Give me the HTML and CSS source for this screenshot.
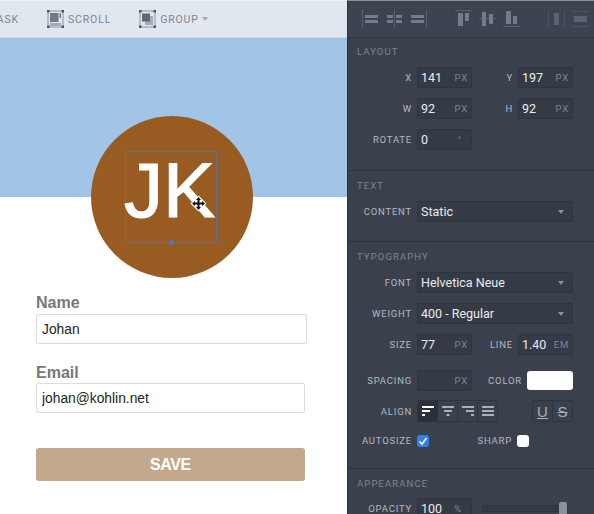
FILE: index.html
```html
<!DOCTYPE html>
<html lang="en">
<head>
  <meta charset="UTF-8" />
  <title>Profile editor</title>
  <link rel="stylesheet" href="styles.css">
</head>
<body>

<div class="app">
  <div class="canvas">
    <div class="toolbar">
      <div class="tool tool-clip"><span>MASK</span></div>
      <div class="tool tool-scroll">
        <svg width="17" height="18" viewBox="0 0 17 18">
          <rect x="1" y="1" width="15" height="16" fill="none" stroke="#8b94a0"/>
          <rect x="3" y="3" width="8.5" height="9" fill="#717a87"/>
          <rect x="3" y="13" width="11" height="3" fill="#a3abb6"/>
          <rect x="12.5" y="3" width="1.5" height="5" fill="#717a87"/>
          <rect x="0" y="0" width="2.5" height="2.5" fill="#4c5460"/><rect x="14.5" y="0" width="2.5" height="2.5" fill="#4c5460"/>
          <rect x="0" y="15.5" width="2.5" height="2.5" fill="#4c5460"/><rect x="14.5" y="15.5" width="2.5" height="2.5" fill="#4c5460"/>
        </svg>
        <span>SCROLL</span>
      </div>
      <div class="tool tool-group">
        <svg width="17" height="18" viewBox="0 0 17 18">
          <rect x="1" y="1" width="15" height="16" fill="none" stroke="#8b94a0"/>
          <rect x="6" y="6" width="8" height="9" fill="#a3abb6"/>
          <rect x="3" y="3.5" width="8" height="8" fill="#5f6874"/>
          <rect x="0" y="0" width="2.5" height="2.5" fill="#4c5460"/><rect x="14.5" y="0" width="2.5" height="2.5" fill="#4c5460"/>
          <rect x="0" y="15.5" width="2.5" height="2.5" fill="#4c5460"/><rect x="14.5" y="15.5" width="2.5" height="2.5" fill="#4c5460"/>
        </svg>
        <span>GROUP</span>
        <i class="caret caret-light"></i>
      </div>
    </div>

    <div class="hero"></div>

    <div class="avatar">
      <div class="selection">
        <span class="initials">JK</span>
        <i class="handle"></i>
      </div>
      <svg class="move-cursor" width="17" height="17" viewBox="0 0 17 17">
        <path d="M8.5 0.5 L16.5 8.5 L8.5 16.5 L0.5 8.5 Z" fill="#fff"/>
        <path d="M8.5 2 L11 5 H9.5 V7.5 H12 V6 L15 8.5 L12 11 V9.5 H9.5 V12 H11 L8.5 15 L6 12 H7.5 V9.5 H5 V11 L2 8.5 L5 6 V7.5 H7.5 V5 H6 Z" fill="#111"/>
      </svg>
    </div>

    <form class="profile-form">
      <label class="form-label" for="name">Name</label>
      <input class="form-input name-input" id="name" type="text" value="Johan" />
      <label class="form-label email-label" for="email">Email</label>
      <input class="form-input" id="email" type="text" value="johan@kohlin.net" />
      <button class="save-btn" type="button">SAVE</button>
    </form>
  </div>

  <div class="panel">
    <div class="align-bar">
      <svg width="17" height="18" viewBox="0 0 17 18"><rect x="0" y="0" width="1" height="18" fill="#5a626f"/><rect x="3" y="5" width="13" height="3" fill="#737c89"/><rect x="3" y="10" width="13" height="3" fill="#737c89"/></svg>
      <svg width="17" height="18" viewBox="0 0 17 18"><rect x="8" y="0" width="1" height="18" fill="#5a626f"/><rect x="1" y="5" width="6" height="3" fill="#737c89"/><rect x="10" y="5" width="6" height="3" fill="#737c89"/><rect x="1" y="10" width="6" height="3" fill="#737c89"/><rect x="10" y="10" width="6" height="3" fill="#737c89"/></svg>
      <svg width="17" height="18" viewBox="0 0 17 18"><rect x="16" y="0" width="1" height="18" fill="#5a626f"/><rect x="1" y="5" width="13" height="3" fill="#737c89"/><rect x="1" y="10" width="13" height="3" fill="#737c89"/></svg>
      <svg class="group-start" width="17" height="18" viewBox="0 0 17 18"><rect x="0" y="0" width="17" height="1" fill="#5a626f"/><rect x="3" y="3" width="5" height="13" fill="#737c89"/><rect x="10" y="3" width="4" height="8" fill="#737c89"/></svg>
      <svg width="17" height="18" viewBox="0 0 17 18"><rect x="0" y="8" width="17" height="1" fill="#5a626f"/><rect x="3" y="2" width="4" height="14" fill="#737c89"/><rect x="10" y="4" width="4" height="10" fill="#737c89"/></svg>
      <svg width="17" height="18" viewBox="0 0 17 18"><rect x="0" y="16" width="17" height="1" fill="#5a626f"/><rect x="3" y="1" width="5" height="13" fill="#737c89"/><rect x="10" y="6" width="4" height="8" fill="#737c89"/></svg>
      <svg class="group-start dim" width="17" height="18" viewBox="0 0 17 18"><rect x="0" y="0" width="1" height="18" fill="#5a626f"/><rect x="16" y="0" width="1" height="18" fill="#5a626f"/><rect x="6" y="3" width="5" height="12" fill="#737c89"/></svg>
      <svg class="dim" width="17" height="18" viewBox="0 0 17 18"><rect x="0" y="1" width="17" height="1" fill="#5a626f"/><rect x="0" y="16" width="17" height="1" fill="#5a626f"/><rect x="2" y="6" width="13" height="6" fill="#737c89"/></svg>
    </div>

    <section class="section section-layout">
      <h3>LAYOUT</h3>
      <div class="row">
        <label>X</label><div class="field"><span>141</span><em>PX</em></div>
        <label class="second">Y</label><div class="field"><span>197</span><em>PX</em></div>
      </div>
      <div class="row">
        <label>W</label><div class="field"><span>92</span><em>PX</em></div>
        <label class="second">H</label><div class="field"><span>92</span><em>PX</em></div>
      </div>
      <div class="row">
        <label>ROTATE</label><div class="field"><span>0</span><em class="deg">°</em></div>
      </div>
    </section>

    <section class="section section-text">
      <h3>TEXT</h3>
      <div class="row">
        <label>CONTENT</label><div class="field select"><span>Static</span><i class="caret"></i></div>
      </div>
    </section>

    <section class="section section-type">
      <h3>TYPOGRAPHY</h3>
      <div class="row">
        <label>FONT</label><div class="field select"><span>Helvetica Neue</span><i class="caret"></i></div>
      </div>
      <div class="row">
        <label>WEIGHT</label><div class="field select"><span>400 - Regular</span><i class="caret"></i></div>
      </div>
      <div class="row">
        <label>SIZE</label><div class="field"><span>77</span><em>PX</em></div>
        <label class="second">LINE</label><div class="field"><span>1.40</span><em>EM</em></div>
      </div>
      <div class="row row-spacing">
        <label>SPACING</label><div class="field"><span></span><em>PX</em></div>
        <label class="color-label">COLOR</label><div class="swatch"></div>
      </div>
      <div class="row row-align">
        <label>ALIGN</label>
        <div class="btn-group">
          <button class="active" type="button"><svg width="12" height="10" viewBox="0 0 12 10"><rect width="12" height="2"/><rect y="4" width="8" height="2"/><rect y="8" width="3" height="2"/></svg></button>
          <button type="button"><svg width="12" height="10" viewBox="0 0 12 10"><rect width="12" height="2"/><rect x="2" y="4" width="8" height="2"/><rect x="4.5" y="8" width="3" height="2"/></svg></button>
          <button type="button"><svg width="12" height="10" viewBox="0 0 12 10"><rect width="12" height="2"/><rect x="4" y="4" width="8" height="2"/><rect x="9" y="8" width="3" height="2"/></svg></button>
          <button type="button"><svg width="12" height="10" viewBox="0 0 12 10"><rect width="12" height="2"/><rect y="4" width="12" height="2"/><rect y="8" width="12" height="2"/></svg></button>
        </div>
        <div class="btn-group style-group">
          <button type="button"><u>U</u></button>
          <button type="button"><s>S</s></button>
        </div>
      </div>
      <div class="row row-check">
        <label>AUTOSIZE</label>
        <div class="check checked"><svg width="10" height="10" viewBox="0 0 10 10"><path d="M1.5 5.5 L4 8 L8.5 2" fill="none" stroke="#fff" stroke-width="1.6"/></svg></div>
        <label class="sharp-label">SHARP</label>
        <div class="check"></div>
      </div>
    </section>

    <section class="section section-appearance">
      <h3>APPEARANCE</h3>
      <div class="row">
        <label>OPACITY</label><div class="field"><span>100</span><em class="pct">%</em></div>
        <div class="slider"><i class="thumb"></i></div>
      </div>
    </section>
  </div>
</div>

</body>
</html>
```

FILE: styles.css
```css
* {
  box-sizing: border-box;
}
html, body {
  margin: 0;
  height: 100%;
  overflow: hidden;
}
.app {
  display: flex;
  width: 594px;
  height: 514px;
  font-family: "Liberation Sans", sans-serif;
}

/* left side */
.canvas {
  width: 347px;
  height: 514px;
  background: #fff;
  flex: none;
  overflow: hidden;
}
.toolbar {
  display: flex;
  align-items: center;
  height: 38px;
  background: #e1e7ef;
  border-top: 1px solid #f0f1f3;
  border-bottom: 1px solid #d3d9e1;
  font-family: Roboto, sans-serif;
  font-size: 10.5px;
  letter-spacing: 0.85px;
  color: #7c8592;
}
.tool {
  display: flex;
  align-items: center;
}
.tool-clip {
  width: 19px;
  justify-content: flex-end;
  overflow: hidden;
}
.tool-scroll {
  margin-left: 28px;
  gap: 4px;
}
.tool-group {
  margin-left: 28px;
  gap: 4px;
}
.tool-group .caret {
  margin-left: -1px;
}
.caret {
  display: block;
  width: 0;
  height: 0;
  border-left: 3px solid transparent;
  border-right: 3px solid transparent;
  border-top: 4px solid #8a93a0;
}
.caret-light {
  border-top-color: #a3abb6;
}
.hero {
  height: 159px;
  background: #a2c4e6;
}
.avatar {
  position: relative;
  display: flex;
  align-items: center;
  justify-content: center;
  width: 162px;
  height: 162px;
  margin: -81px 0 0 91px;
  border-radius: 50%;
  background: #985b22;
}
.selection {
  position: relative;
  width: 92px;
  height: 92px;
  margin-right: 2px;
  border: 1px solid #64708a;
}
.initials {
  display: block;
  margin: -1px 0 0 -2px;
  font-size: 78px;
  line-height: 78px;
  color: #fff;
  -webkit-text-stroke: 1.2px #fff;
  white-space: nowrap;
}
.handle {
  position: absolute;
  left: 43px;
  bottom: -3px;
  width: 5px;
  height: 5px;
  border-radius: 50%;
  background: #4a78c8;
}
.move-cursor {
  position: absolute;
  left: 99px;
  top: 79px;
}
.profile-form {
  padding: 16px 0 0 36px;
}
.form-label {
  display: block;
  height: 20px;
  font-size: 16px;
  line-height: 18px;
  font-weight: bold;
  color: #777;
}
.email-label {
  margin-top: 20px;
  height: 19px;
}
.form-input {
  display: block;
  width: 269px;
  height: 30px;
  padding: 0 5px;
  border: 1px solid #ddd;
  border-radius: 2px;
  font-family: "Liberation Sans", sans-serif;
  font-size: 13.8px;
  color: #222;
  outline: none;
}
.name-input {
  width: 271px;
}
.save-btn {
  display: block;
  width: 269px;
  height: 33px;
  margin-top: 35px;
  border: none;
  border-radius: 3px;
  background: #c3a88b;
  color: #fff;
  font-family: "Liberation Sans", sans-serif;
  font-size: 16px;
  letter-spacing: -0.4px;
  font-weight: bold;
}

/* right side */
.panel {
  flex: 1;
  height: 514px;
  overflow: hidden;
  background: #3a414d;
  border-left: 1px solid #2b313b;
  border-top: 1px solid #8b9097;
  font-family: Roboto, sans-serif;
  color: #e9ecef;
}
.align-bar {
  display: flex;
  align-items: center;
  gap: 7px;
  height: 37px;
  padding-left: 14px;
  background: #3d4451;
  border-bottom: 1px solid #343a45;
}
.align-bar .group-start {
  margin-left: 21px;
}
.align-bar .dim {
  opacity: 0.55;
}
.section {
  border-bottom: 1px solid #2f353f;
  padding-left: 9px;
}
.section h3 {
  margin: 0 0 8px;
  height: 14px;
  font-size: 9.5px;
  line-height: 14px;
  font-weight: 400;
  letter-spacing: 1.1px;
  color: #7d8591;
}
.section-layout {
  height: 133px;
  padding-top: 7px;
}
.section-text {
  height: 71px;
  padding-top: 8px;
}
.section-type {
  height: 227px;
  padding-top: 8px;
}
.section-appearance {
  padding-top: 8px;
  border-bottom: none;
}
.section-appearance h3 {
  margin-bottom: 7px;
}
.row {
  display: flex;
  align-items: center;
  height: 21px;
  margin-bottom: 10px;
}
.row label {
  width: 55px;
  margin-right: 5px;
  text-align: right;
  font-size: 9.5px;
  letter-spacing: 0.8px;
  color: #b3b9c2;
  flex: none;
}
.row .second {
  width: 41px;
}
.row .color-label {
  width: 50px;
}
.row .sharp-label {
  width: 83px;
}
.field {
  display: flex;
  align-items: center;
  justify-content: space-between;
  width: 55px;
  height: 21px;
  padding: 0 3px;
  background: #353b46;
  border: 1px solid #2f353f;
  border-radius: 2px;
  font-size: 12.5px;
  line-height: 12px;
  flex: none;
}
.field em {
  font-style: normal;
  font-size: 9.5px;
  letter-spacing: 0.8px;
  color: #7d8591;
}
.field .deg, .field .pct {
  margin-right: 6px;
}
.select {
  width: 156px;
}
.select .caret {
  margin-right: 5px;
}
.row-spacing {
  margin-top: 15px;
}
.swatch {
  width: 46px;
  height: 19px;
  background: #fff;
  border-radius: 3px;
}
.row-align {
  height: 22px;
  margin-top: -1px;
  margin-bottom: 12px;
}
.btn-group {
  display: flex;
  background: #2f353f;
  border-radius: 2px;
  padding: 1px;
  gap: 1px;
}
.btn-group button {
  display: flex;
  align-items: center;
  justify-content: center;
  width: 19px;
  height: 20px;
  padding: 0;
  border: none;
  background: #3a414d;
  color: #aab1bb;
  font-family: "Liberation Sans", sans-serif;
  font-size: 15px;
  fill: #aab1bb;
}
.btn-group .active {
  background: #2b313b;
  fill: #fff;
}
.style-group {
  margin-left: 34px;
}
.row-check {
  height: 13px;
  margin-bottom: 0;
}
.check {
  width: 12px;
  height: 12px;
  background: #fff;
  border-radius: 3px;
  flex: none;
}
.checked {
  display: flex;
  align-items: center;
  justify-content: center;
  background: #2f80ed;
}
.slider {
  position: relative;
  width: 86px;
  height: 7px;
  margin-left: 10px;
  background: #333a45;
  border: 1px solid #2f353f;
  border-radius: 2px;
}
.thumb {
  position: absolute;
  right: 0;
  top: -4px;
  width: 8px;
  height: 13px;
  background: #8a929e;
  border-radius: 2px;
}
```
